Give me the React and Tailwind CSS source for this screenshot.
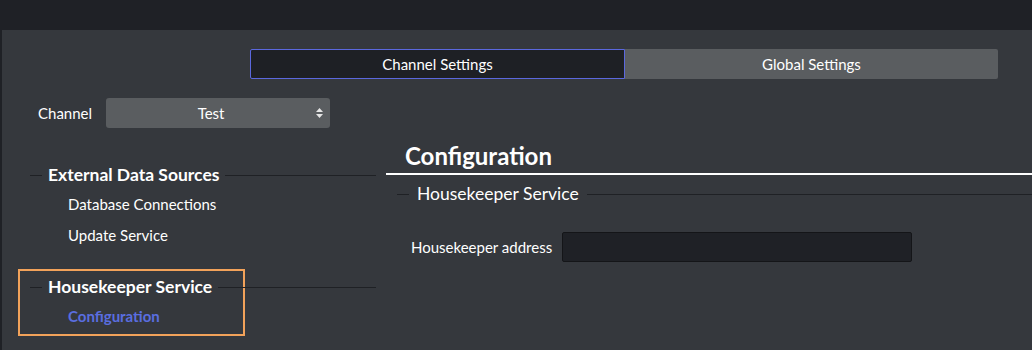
import { useState } from 'react';

const font = { fontFamily: '"Lato", "Noto Sans", sans-serif' };

function SectionHeading({ children }) {
  return (
    <div className="flex items-center h-[18px]">
      <div className="w-3 h-px bg-[#1f2125]" />
      <span className="px-1.5 text-[17.5px] font-bold text-white leading-none">{children}</span>
      <div className="flex-1 h-px bg-[#1f2125]" />
    </div>
  );
}

export default function App() {
  const [tab, setTab] = useState('channel');

  return (
    <div style={font} className="w-[1032px] h-[350px] bg-[#35383d] text-white overflow-hidden flex flex-col">
      {/* top strip */}
      <div className="h-[30px] bg-[#1f2126] shrink-0" />

      <div className="flex-1 flex flex-col border-l-2 border-[#1f2126]">
        {/* tabs */}
        <div className="flex pt-[19px] pl-[248px] pr-[34px]">
          <button
            onClick={() => setTab('channel')}
            className={`flex-1 h-[30px] text-[15px] rounded-l-[2px] ${tab === 'channel' ? 'bg-[#1e2025] border border-[#5b68de]' : 'bg-[#5a5d60]'}`}
          >
            Channel Settings
          </button>
          <button
            onClick={() => setTab('global')}
            className={`flex-1 h-[30px] text-[15px] rounded-r-[2px] ${tab === 'global' ? 'bg-[#1e2025] border border-[#5b68de]' : 'bg-[#5a5d60]'}`}
          >
            Global Settings
          </button>
        </div>

        {/* channel select */}
        <div className="mt-[19px] flex items-center pl-[36px] gap-[14px]">
          <span className="text-[15px]">Channel</span>
          <div className="relative w-[224px] h-[30px] bg-[#5a5d60] rounded-[3px] flex items-center justify-center pr-[14px] text-[15px]">
            Test
            <svg className="absolute right-[7px] top-[10px]" width="7" height="10" viewBox="0 0 7 10">
              <path d="M3.5 0 L7 4 H0 Z M0 6 H7 L3.5 10 Z" fill="#e6e6e6" />
            </svg>
          </div>
        </div>

        <div className="flex items-start">
          {/* left nav */}
          <div className="w-[374px] shrink-0 pl-[28px] pt-[38px]">
            <SectionHeading>External Data Sources</SectionHeading>
            <div className="pl-[38px] text-[15px] leading-[20px] flex flex-col gap-[11px] mt-[10px]">
              <span>Database Connections</span>
              <span>Update Service</span>
            </div>

            <div className="mt-[24px] -ml-[12px] w-[227px] h-[67px] border-2 border-[#f2a25a] pl-[10px] pt-[7px]">
              <div className="w-[346px]">
                <SectionHeading>Housekeeper Service</SectionHeading>
              </div>
              <div className="pl-[38px] mt-[10px] text-[15px] leading-[20px] font-bold text-[#5a6ee0]">Configuration</div>
            </div>
          </div>

          {/* right content */}
          <div className="flex-1 pl-[10px] pt-[16px]">
            <h1 className="pl-[19px] text-[24px] h-[24px] font-bold leading-none">Configuration</h1>
            <div className="mt-[5px] h-[2px] bg-white" />
            <div className="mt-[10px] h-[18px] flex items-center">
              <div className="w-[12px] ml-[11px] h-px bg-[#1f2125]" />
              <span className="px-[8px] text-[17.5px] leading-none">Housekeeper Service</span>
              <div className="flex-1 h-px bg-[#1f2125]" />
            </div>
            <div className="mt-[29px] flex items-center pl-[25px] gap-[10px]">
              <span className="text-[15px]">Housekeeper address</span>
              <input className="w-[350px] h-[30px] bg-[#1f2126] border border-[#141518] rounded-[2px] outline-none px-2 text-[15px]" />
            </div>
          </div>
        </div>
      </div>
    </div>
  );
}
